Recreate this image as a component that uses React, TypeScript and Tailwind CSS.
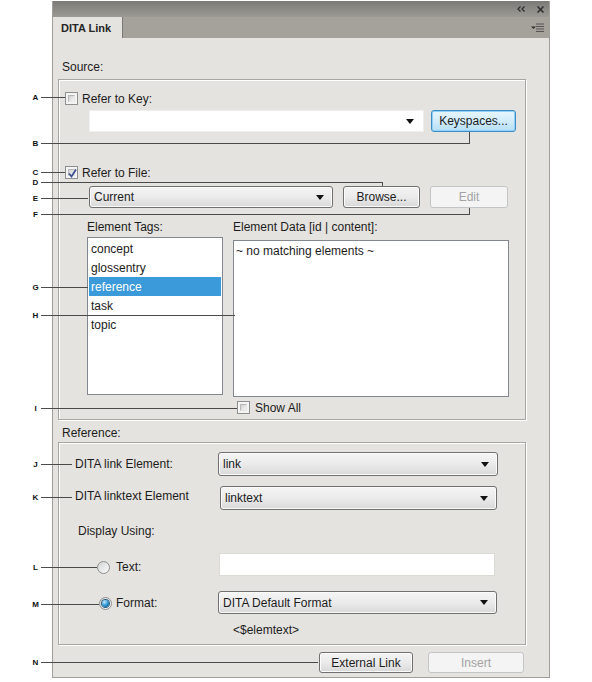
import React from "react"

type CalloutProp = {
  letter: string
  y: number
  x2: number
  vy?: number
}

// callout letters and leader lines drawn over the dialog
const callouts: CalloutProp[] = [
  { letter: "A", y: 97, x2: 65 },
  { letter: "B", y: 143, x2: 470, vy: 132 },
  { letter: "C", y: 172, x2: 65 },
  { letter: "D", y: 182, x2: 383, vy: 186 },
  { letter: "E", y: 198, x2: 88 },
  { letter: "F", y: 214, x2: 470, vy: 208 },
  { letter: "G", y: 287, x2: 88 },
  { letter: "H", y: 315, x2: 235 },
  { letter: "I", y: 408, x2: 237 },
  { letter: "J", y: 464, x2: 72 },
  { letter: "K", y: 497, x2: 72 },
  { letter: "L", y: 567, x2: 97 },
  { letter: "M", y: 604, x2: 99 },
  { letter: "N", y: 662, x2: 318 },
]

const Callouts = () => (
  <svg
    className="absolute left-0 top-0 pointer-events-none"
    width={592}
    height={682}
    viewBox="0 0 592 682"
  >
    {callouts.map((c) => (
      <g key={c.letter}>
        <text
          x={35.5}
          y={c.y + 3}
          textAnchor="middle"
          fontFamily="'Liberation Sans', Arial, sans-serif"
          fontWeight="bold"
          fontSize="8"
          fill="#111"
        >
          {c.letter}
        </text>
        <line x1={41} y1={c.y + 0.5} x2={c.x2} y2={c.y + 0.5} stroke="#4a4a4a" strokeWidth={1} />
        {c.vy !== undefined && (
          <line x1={c.x2 - 0.5} y1={c.y + 0.5} x2={c.x2 - 0.5} y2={c.vy} stroke="#4a4a4a" strokeWidth={1} />
        )}
      </g>
    ))}
  </svg>
)

const Arrow = () => (
  <svg width="8" height="5" viewBox="0 0 8 5" className="shrink-0">
    <path d="M0 0h8L4 5z" fill="#111" />
  </svg>
)

const Checkbox = ({ checked }: { checked?: boolean }) => (
  <span className="relative w-[13px] h-[13px] shrink-0 border border-[#8e8f8f] bg-[#f4f4f4] p-[2px] flex">
    <span className="flex-1 bg-gradient-to-br from-[#cfd0d0] to-[#f6f6f6] border border-[#b7b8b8] border-r-[#e6e6e6] border-b-[#e6e6e6]" />
    {checked && (
      <svg width="11" height="11" viewBox="0 0 11 11" className="absolute left-px top-px">
        <path d="M2 5.5 L4.5 8.5 L9 1.5" fill="none" stroke="#3c5290" strokeWidth="1.8" />
      </svg>
    )}
  </span>
)

const Radio = ({ checked }: { checked?: boolean }) => (
  <span className="w-[13px] h-[13px] shrink-0 rounded-full border border-[#8e8f8f] bg-gradient-to-br from-[#d4d5d5] to-[#fbfbfb] flex items-center justify-center">
    {checked && (
      <span className="w-[7px] h-[7px] rounded-full bg-[radial-gradient(circle_at_35%_30%,#c4ecff,#1f8ccc_55%,#0b4b73)] shadow-[0_0_0_1px_#2b5c7d]" />
    )}
  </span>
)

const Combo = ({ value, className }: { value: string; className: string }) => (
  <div
    className={`flex items-center justify-between rounded-[3px] border border-[#707070] bg-gradient-to-b from-[#f5f5f5] via-[#ebebeb] to-[#d9d9d9] shadow-[inset_0_0_0_1px_#fbfbfb] pl-[4px] pr-[8px] ${className}`}
  >
    <span>{value}</span>
    <Arrow />
  </div>
)

const Button = ({
  children,
  className,
  disabled,
}: {
  children: React.ReactNode
  className: string
  disabled?: boolean
}) => (
  <div
    className={`flex items-center justify-center rounded-[3px] border ${
      disabled
        ? "border-[#c2c4c6] bg-[#f4f4f4] text-[#a3a3a3]"
        : "border-[#707070] bg-gradient-to-b from-[#f3f3f3] via-[#ebebeb] to-[#d8d8d8] shadow-[inset_0_0_0_1px_#fcfcfc]"
    } ${className}`}
  >
    {children}
  </div>
)

const tags = ["concept", "glossentry", "reference", "task", "topic"]

export default function App() {
  return (
    <div className="relative w-[592px] h-[682px] bg-white overflow-hidden text-[12px] leading-[14px] text-[#1c1c1c] font-['Liberation_Sans',Arial,sans-serif]">
      <div className="ml-[52px] mt-[1px] w-[498px] h-[677px] flex flex-col border-x border-b border-[#a19f9a] bg-[#e5e3df]">
        {/* title bar */}
        <div className="h-[16px] shrink-0 bg-gradient-to-b from-[#7c7a76] to-[#9c9a95] flex items-center justify-end gap-[12px] pr-[5px]">
          <svg width="8" height="6" viewBox="0 0 8 6">
            <path d="M3.5 0.5 L1 3 L3.5 5.5 M7.5 0.5 L5 3 L7.5 5.5" fill="none" stroke="#2e2e2e" strokeWidth="1.3" />
          </svg>
          <svg width="7" height="7" viewBox="0 0 7 7">
            <path d="M0.5 0.5 L6.5 6.5 M6.5 0.5 L0.5 6.5" fill="none" stroke="#2e2e2e" strokeWidth="1.5" />
          </svg>
        </div>
        {/* tab strip */}
        <div className="h-[21px] shrink-0 bg-[#a5a29c] flex items-stretch justify-between">
          <div className="w-[70px] bg-[#e5e3df] border-r border-[#7b7975] flex items-center pl-[8px] text-[11px] font-bold text-[#262626]">
            DITA Link
          </div>
          <div className="flex items-center pr-[4px]">
            <svg width="14" height="9" viewBox="0 0 14 9">
              <path d="M0 3.5h5L2.5 6z" fill="#2e2e2e" />
              <path d="M5 1h8M5 3.5h8M5 6h8M5 8.5h8" stroke="#555" strokeWidth="1" />
            </svg>
          </div>
        </div>

        {/* content */}
        <div className="flex-1 pl-[5px] flex flex-col items-start">
          <div className="mt-[22px] ml-[4px]">Source:</div>

          {/* source group */}
          <div className="mt-[5px] w-[468px] border border-[#a9a7a2] shadow-[inset_1px_1px_0_#fff,1px_1px_0_#fff] pb-[5px] flex flex-col">
            <div className="mt-[12px] h-[13px] flex items-center">
              <span className="ml-[6px]">
                <Checkbox />
              </span>
              <span className="ml-[4px]">Refer to Key:</span>
            </div>
            <div className="mt-[5px] ml-[30px] flex">
              <div className="w-[335px] h-[22px] bg-white border border-[#efefef] flex items-center justify-end pr-[9px]">
                <Arrow />
              </div>
              <div className="ml-[7px] w-[85px] h-[22px] rounded-[3px] border border-[#3c8dc5] bg-gradient-to-b from-[#e8f6fd] via-[#d2ecfb] to-[#b5dff8] shadow-[inset_0_0_0_1px_#8fd0f4] flex items-center justify-center">
                Keyspaces...
              </div>
            </div>
            <div className="mt-[34px] h-[13px] flex items-center">
              <span className="ml-[6px]">
                <Checkbox checked />
              </span>
              <span className="ml-[4px]">Refer to File:</span>
            </div>
            <div className="mt-[7px] ml-[30px] flex">
              <Combo value="Current" className="w-[244px] h-[22px]" />
              <Button className="ml-[10px] w-[77px] h-[22px]">Browse...</Button>
              <Button disabled className="ml-[10px] w-[78px] h-[22px]">
                Edit
              </Button>
            </div>
            <div className="mt-[12px] ml-[28px] flex h-[14px]">
              <span className="w-[146px]">Element Tags:</span>
              <span>Element Data [id | content]:</span>
            </div>
            <div className="mt-[3px] ml-[28px] flex items-start">
              <div className="w-[136px] h-[158px] bg-white border border-[#828790] pt-px">
                {tags.map((t) => (
                  <div key={t} className="h-[19px] px-px">
                    <div
                      className={`h-full flex items-center pl-[2px] ${
                        t === "reference" ? "bg-[#3b9ad9] text-white" : ""
                      }`}
                    >
                      {t}
                    </div>
                  </div>
                ))}
              </div>
              <div className="ml-[10px] mt-[3px] w-[276px] h-[157px] bg-white border border-[#828790] pt-[3px] pl-[2px]">
                ~ no matching elements ~
              </div>
            </div>
            <div className="mt-[4px] h-[13px] flex items-center ml-[178px]">
              <Checkbox />
              <span className="ml-[5px]">Show All</span>
            </div>
          </div>

          <div className="mt-[6px] ml-[4px]">Reference:</div>

          {/* reference group */}
          <div className="mt-[2px] w-[468px] border border-[#a9a7a2] shadow-[inset_1px_1px_0_#fff,1px_1px_0_#fff] pb-[7px] flex flex-col">
            <div className="mt-[9px] h-[24px] flex items-center">
              <span className="ml-[16px] w-[143px]">DITA link Element:</span>
              <Combo value="link" className="w-[280px] h-[24px]" />
            </div>
            <div className="mt-[10px] h-[24px] flex items-start">
              <span className="ml-[16px] w-[145px] mt-[3px]">DITA linktext Element</span>
              <Combo value="linktext" className="w-[277px] h-[24px]" />
            </div>
            <div className="mt-[14px] ml-[19px]">Display Using:</div>
            <div className="mt-[15px] h-[23px] flex items-start">
              <div className="w-[160px] flex items-start">
                <span className="ml-[38px] mt-[8px]">
                  <Radio />
                </span>
                <span className="ml-[6px] mt-[7px]">Text:</span>
              </div>
              <div className="w-[276px] h-[23px] bg-white border border-[#dcdad5]" />
            </div>
            <div className="mt-[15px] h-[23px] flex items-start">
              <div className="w-[159px] flex items-start">
                <span className="ml-[40px] mt-[6px]">
                  <Radio checked />
                </span>
                <span className="ml-[4px] mt-[5px]">Format:</span>
              </div>
              <Combo value="DITA Default Format" className="w-[279px] h-[23px]" />
            </div>
            <div className="mt-[9px] ml-[174px]">&lt;$elemtext&gt;</div>
          </div>

          <div className="mt-[7px] ml-[261px] flex">
            <Button className="w-[94px] h-[21px]">External Link</Button>
            <Button disabled className="ml-[15px] w-[96px] h-[21px]">
              Insert
            </Button>
          </div>
        </div>
      </div>
      <Callouts />
    </div>
  )
}
